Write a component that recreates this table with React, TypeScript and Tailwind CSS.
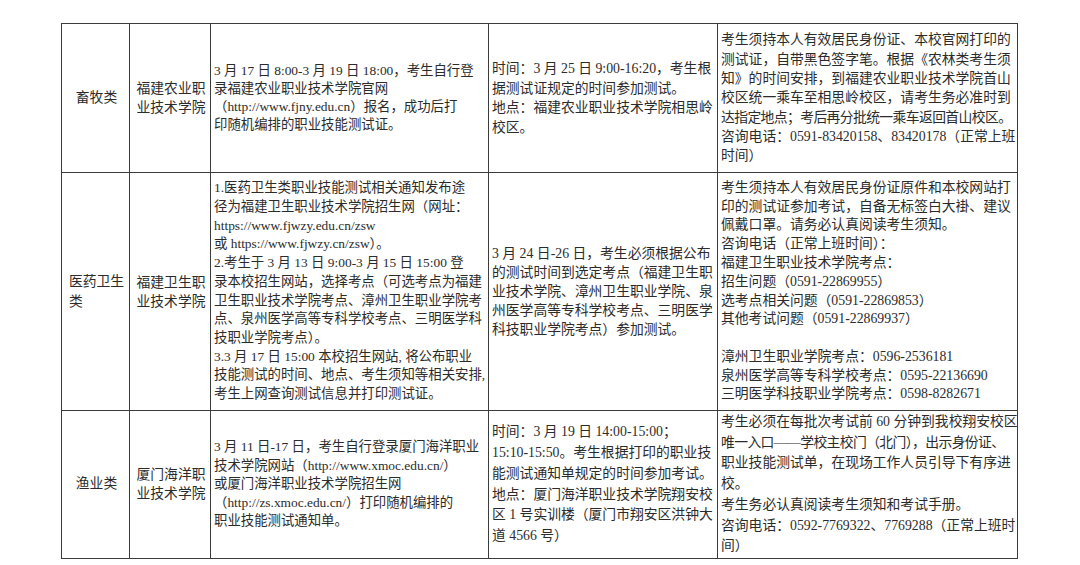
import React from "react";

type Cell = {
  lines: string[];
  leading: string;
  size?: string;
  center?: boolean;
};

// lines starting with "~" are slightly condensed so they fit the cell, as the original document does
const rows: Cell[][] = [
  [
    { lines: ["畜牧类"], leading: "leading-[18.5px]", center: true },
    { lines: ["福建农业职", "业技术学院"], leading: "leading-[19px]", center: true },
    {
      lines: [
        "3 月 17 日 8:00-3 月 19 日 18:00，考生自行登",
        "录福建农业职业技术学院官网",
        "（http://www.fjny.edu.cn）报名，成功后打",
        "印随机编排的职业技能测试证。",
      ],
      leading: "leading-[18px]",
      size: "text-[13.4px]",
    },
    {
      lines: [
        "时间：3 月 25 日 9:00-16:20，考生根",
        "据测试证规定的时间参加测试。",
        "地点：福建农业职业技术学院相思岭",
        "校区。",
      ],
      leading: "leading-[19.5px]",
    },
    {
      lines: [
        "考生须持本人有效居民身份证、本校官网打印的",
        "测试证，自带黑色签字笔。根据《农林类考生须",
        "知》的时间安排，到福建农业职业技术学院首山",
        "校区统一乘车至相思岭校区，请考生务必准时到",
        "~达指定地点；考后再分批统一乘车返回首山校区。",
        "咨询电话：0591-83420158、83420178（正常上班",
        "时间）",
      ],
      leading: "leading-[19.3px]",
    },
  ],
  [
    { lines: ["医药卫生", "类"], leading: "leading-[20px]", center: true },
    { lines: ["福建卫生职", "业技术学院"], leading: "leading-[19px]", center: true },
    {
      lines: [
        "1.医药卫生类职业技能测试相关通知发布途",
        "径为福建卫生职业技术学院招生网（网址：",
        "https://www.fjwzy.edu.cn/zsw",
        "或 https://www.fjwzy.cn/zsw）。",
        "2.考生于 3 月 13 日 9:00-3 月 15 日 15:00 登",
        "录本校招生网站，选择考点（可选考点为福建",
        "卫生职业技术学院考点、漳州卫生职业学院考",
        "点、泉州医学高等专科学校考点、三明医学科",
        "技职业学院考点）。",
        "3.3 月 17 日 15:00 本校招生网站, 将公布职业",
        "技能测试的时间、地点、考生须知等相关安排,",
        "考生上网查询测试信息并打印测试证。",
      ],
      leading: "leading-[18.7px]",
      size: "text-[13.4px]",
    },
    {
      lines: [
        "3 月 24 日-26 日，考生必须根据公布",
        "的测试时间到选定考点（福建卫生职",
        "业技术学院、漳州卫生职业学院、泉",
        "州医学高等专科学校考点、三明医学",
        "科技职业学院考点）参加测试。",
      ],
      leading: "leading-[19px]",
    },
    {
      lines: [
        "考生须持本人有效居民身份证原件和本校网站打",
        "印的测试证参加考试，自备无标签白大褂、建议",
        "佩戴口罩。请务必认真阅读考生须知。",
        "咨询电话（正常上班时间）：",
        "福建卫生职业技术学院考点：",
        "招生问题（0591-22869955）",
        "选考点相关问题（0591-22869853）",
        "其他考试问题（0591-22869937）",
        "",
        "漳州卫生职业学院考点：0596-2536181",
        "泉州医学高等专科学校考点：0595-22136690",
        "三明医学科技职业学院考点：0598-8282671",
      ],
      leading: "leading-[18.8px]",
    },
  ],
  [
    { lines: ["渔业类"], leading: "leading-[18.5px]", center: true },
    { lines: ["厦门海洋职", "业技术学院"], leading: "leading-[18.5px]", center: true },
    {
      lines: [
        "3 月 11 日-17 日，考生自行登录厦门海洋职业",
        "技术学院网站（http://www.xmoc.edu.cn/）",
        "或厦门海洋职业技术学院招生网",
        "（http://zs.xmoc.edu.cn/）打印随机编排的",
        "职业技能测试通知单。",
      ],
      leading: "leading-[18.5px]",
      size: "text-[13.4px]",
    },
    {
      lines: [
        "时间：3 月 19 日 14:00-15:00；",
        "15:10-15:50。考生根据打印的职业技",
        "能测试通知单规定的时间参加考试。",
        "地点：厦门海洋职业技术学院翔安校",
        "区 1 号实训楼（厦门市翔安区洪钟大",
        "道 4566 号）",
      ],
      leading: "leading-[20.8px]",
    },
    {
      lines: [
        "考生必须在每批次考试前 60 分钟到我校翔安校区",
        "~唯一入口——学校主校门（北门），出示身份证、",
        "职业技能测试单，在现场工作人员引导下有序进",
        "校。",
        "考生务必认真阅读考生须知和考试手册。",
        "咨询电话：0592-7769322、7769288（正常上班时",
        "间）",
      ],
      leading: "leading-[20.8px]",
    },
  ],
];

function TableCell({ cell }: { cell: Cell }) {
  return (
    <div
      className={`bg-white flex flex-col justify-center overflow-hidden pl-[3px] pr-px ${cell.leading} ${
        cell.size ?? "text-[13.8px]"
      } ${cell.center ? "items-center" : "items-start"}`}
    >
      <div>
        {cell.lines.map((line, i) =>
          line.startsWith("~") ? (
            <div key={i} className="whitespace-nowrap tracking-[-0.6px]">
              {line.slice(1)}
            </div>
          ) : (
            <div key={i} className="whitespace-nowrap">
              {line === "" ? "\u00a0" : line}
            </div>
          )
        )}
      </div>
    </div>
  );
}

export default function App() {
  return (
    <div
      lang="zh-CN"
      className="min-h-screen bg-white pt-[23px] pl-[61px] text-[#2b2b2b] font-[family-name:'Liberation_Serif','Noto_Sans_CJK_SC',sans-serif]"
    >
      <div className="w-[957px] grid grid-cols-[67px_80px_277px_228px_299px] grid-rows-[148px_237px_147px] gap-px p-px bg-[#3c3c3c]">
        {rows.map((row, r) =>
          row.map((cell, c) => <TableCell key={`${r}-${c}`} cell={cell} />)
        )}
      </div>
    </div>
  );
}
